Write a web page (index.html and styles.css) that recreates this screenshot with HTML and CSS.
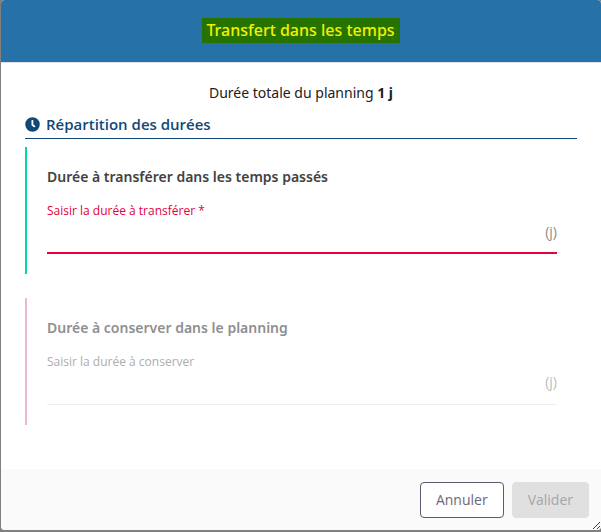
FILE: index.html
```html
<!DOCTYPE html>
<html lang="fr">
<head>
	<meta charset="UTF-8">
	<title>Transfert dans les temps</title>
	<link rel="stylesheet" href="styles.css">
</head>
<body>
	<form class="modal">
		<header class="modal-header">
			<h1><mark>Transfert dans les temps</mark></h1>
		</header>
		<main class="modal-body">
			<p class="total">Durée totale du planning <strong>1 j</strong></p>
			<h2 class="section-title">
				<svg class="icon" viewBox="0 0 512 512" aria-hidden="true">
					<path fill="currentColor" d="M256 8a248 248 0 1 0 0 496a248 248 0 1 0 0-496zm92 313l-20 25a16 16 0 0 1-22 3l-67-50a48 48 0 0 1-18-37V120a16 16 0 0 1 16-16h32a16 16 0 0 1 16 16v136l61 42a16 16 0 0 1 2 23z"/>
				</svg>
				Répartition des durées
			</h2>
			<section class="block transfer">
				<h3>Durée à transférer dans les temps passés</h3>
				<label for="transfer">Saisir la durée à transférer *</label>
				<div class="field">
					<input type="text" id="transfer" required>
					<span class="unit">(j)</span>
				</div>
			</section>
			<section class="block keep">
				<h3>Durée à conserver dans le planning</h3>
				<label for="keep">Saisir la durée à conserver</label>
				<div class="field">
					<input type="text" id="keep" disabled>
					<span class="unit">(j)</span>
				</div>
			</section>
		</main>
		<footer class="modal-footer">
			<button type="button" class="btn cancel">Annuler</button>
			<button type="submit" class="btn submit" disabled>Valider</button>
		</footer>
		<svg class="grip" viewBox="0 0 9 9" aria-hidden="true">
			<path d="M1 8L8 1M5 8L8 5"/>
		</svg>
	</form>
</body>
</html>
```
FILE: styles.css
```css
* {
	box-sizing: border-box;
}
body {
	background-color: #808080;
	font-family: "Open Sans", "Noto Sans", sans-serif;
	font-size: 14px;
	line-height: 20px;
	margin: 0;
	padding: 0 0 2px 1px;
	min-height: 100vh;
	display: flex;
}
h1, h2, h3, p {
	margin: 0;
}
h1, h3, .total {
	font-family: "Noto Sans", "Open Sans", sans-serif;
}
.modal {
	position: relative;
	flex: 1;
	display: flex;
	flex-direction: column;
	background-color: #fff;
	border-radius: 4px;
	overflow: hidden;
}
.modal-header {
	background-color: #2672a8;
	border-bottom: 1px solid #dee2e6;
	padding: 18px 24px 19px;
	text-align: center;
}
.modal-header h1 {
	font-size: 16px;
	font-weight: 500;
	line-height: 25px;
}
.modal-header mark {
	display: inline-block;
	background-color: #267300;
	color: #f2f200;
	padding: 0 5px 0 4px;
}
.modal-body {
	flex: 1;
	padding: 20px 24px 24px;
}
.total {
	color: #212121;
	text-align: center;
}
.section-title {
	display: flex;
	align-items: center;
	gap: 6px;
	border-bottom: 1px solid #124878;
	color: #124878;
	font-size: 15px;
	font-weight: 600;
	margin-top: 11px;
	padding-bottom: 4px;
}
.icon {
	width: 15px;
	height: 15px;
}
.block {
	border-left: 2px solid #00d9a6;
	margin-top: 8px;
	padding: 20px;
}
.block h3 {
	color: #424242;
	font-size: 14px;
	font-weight: 600;
	line-height: 20px;
}
.block label {
	display: block;
	color: #e6003c;
	font-size: 12px;
	line-height: 16px;
	margin-top: 16px;
}
.field {
	display: flex;
	border-bottom: 2px solid #e6003c;
	height: 35px;
	padding-bottom: 10px;
	align-items: flex-end;
}
.field input {
	flex: 1;
	min-width: 0;
	border: none;
	background: none;
	font: inherit;
	padding: 0;
	outline: none;
}
.unit {
	color: #8c8c8c;
}
.block.keep {
	border-left-color: #ebb8dc;
	margin-top: 24px;
}
.keep h3 {
	color: #8f8f8f;
}
.keep label {
	color: #adadad;
}
.keep .field {
	border-bottom: 1px solid #eee;
	padding-bottom: 12px;
}
.keep .unit {
	color: #bdbdbd;
}
.modal-footer {
	display: flex;
	justify-content: flex-end;
	gap: 8px;
	background-color: #fafafa;
	padding: 13px 12px 12px;
}
.btn {
	border: 1px solid #5c5970;
	border-radius: 4px;
	background-color: #fff;
	color: #6b6977;
	font: inherit;
	height: 36px;
	padding: 0 15px;
	cursor: pointer;
}
.btn:disabled {
	background-color: #e0e0e0;
	border-color: #e0e0e0;
	color: #a6a6a6;
	cursor: default;
}
.grip {
	position: absolute;
	right: 0;
	bottom: 0;
	width: 9px;
	height: 9px;
	fill: none;
	stroke: #424242;
}
```
